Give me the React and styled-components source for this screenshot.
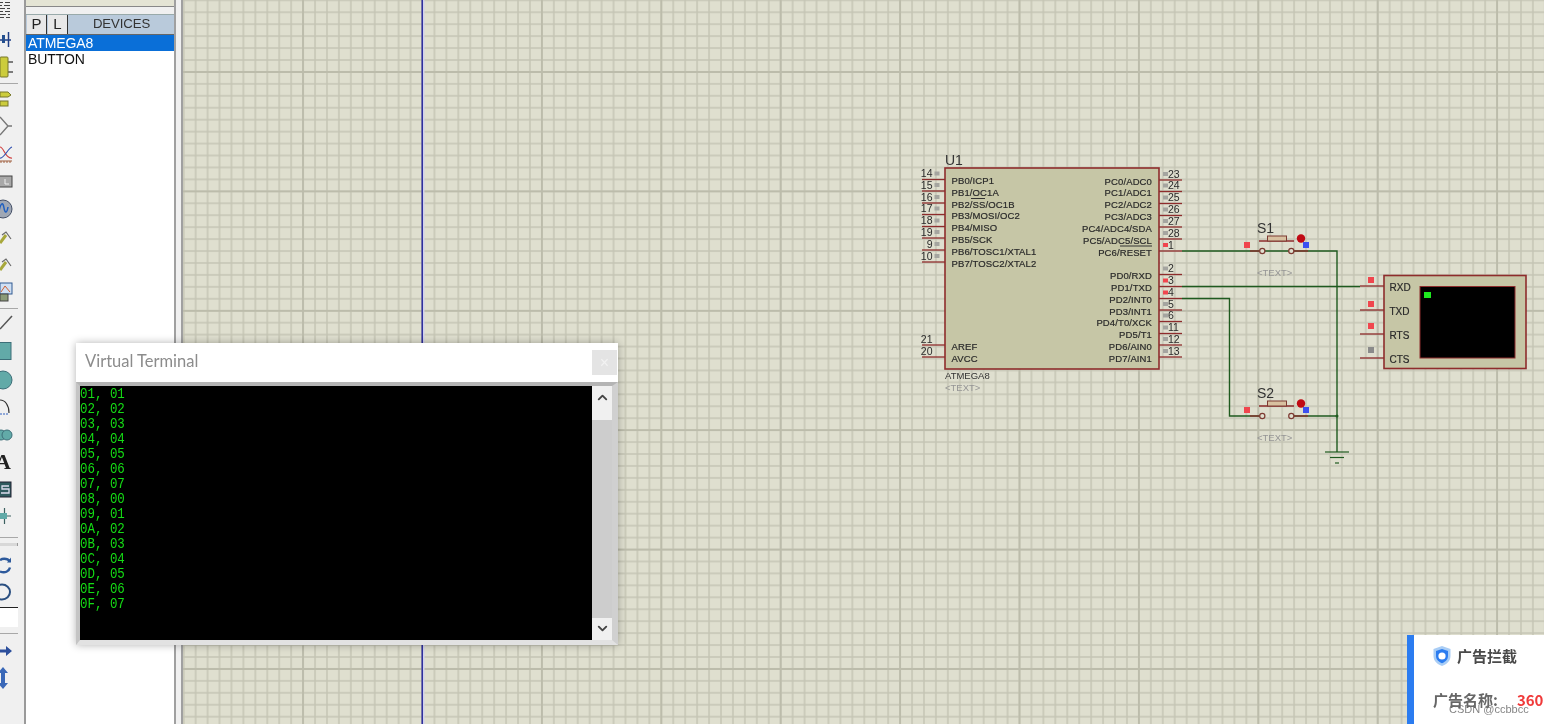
import styled, { createGlobalStyle } from "styled-components";
import { ChevronUp, ChevronDown } from "lucide-react";

const GlobalStyle = createGlobalStyle`
    html, body {
        margin: 0;
        padding: 0;
        overflow: hidden;
    }
`;

const terminalLines = [
    "01, 01", "02, 02", "03, 03", "04, 04", "05, 05",
    "06, 06", "07, 07", "08, 00", "09, 01", "0A, 02",
    "0B, 03", "0C, 04", "0D, 05", "0E, 06", "0F, 07"
];

const leftPins = [
    { num: "14", name: "PB0/ICP1", y: 179.5 },
    { num: "15", name: "PB1/OC1A", y: 191 },
    { num: "16", name: "PB2/SS/OC1B", y: 203 },
    { num: "17", name: "PB3/MOSI/OC2", y: 214.5 },
    { num: "18", name: "PB4/MISO", y: 226.5 },
    { num: "19", name: "PB5/SCK", y: 238 },
    { num: "9", name: "PB6/TOSC1/XTAL1", y: 250 },
    { num: "10", name: "PB7/TOSC2/XTAL2", y: 262 },
    { num: "21", name: "AREF", y: 345, plain: true },
    { num: "20", name: "AVCC", y: 357, plain: true }
];

const rightPins = [
    { num: "23", name: "PC0/ADC0", y: 180 },
    { num: "24", name: "PC1/ADC1", y: 191.5 },
    { num: "25", name: "PC2/ADC2", y: 203.5 },
    { num: "26", name: "PC3/ADC3", y: 215.5 },
    { num: "27", name: "PC4/ADC4/SDA", y: 227 },
    { num: "28", name: "PC5/ADC5/SCL", y: 239 },
    { num: "1", name: "PC6/RESET", y: 251, high: true },
    { num: "2", name: "PD0/RXD", y: 274.5 },
    { num: "3", name: "PD1/TXD", y: 286.5, high: true },
    { num: "4", name: "PD2/INT0", y: 298.5, high: true },
    { num: "5", name: "PD3/INT1", y: 310 },
    { num: "6", name: "PD4/T0/XCK", y: 321.5 },
    { num: "11", name: "PD5/T1", y: 333.5 },
    { num: "12", name: "PD6/AIN0", y: 345 },
    { num: "13", name: "PD7/AIN1", y: 357 }
];

const terminalPins = [
    { name: "RXD", y: 286, dot: "#f0464e", dotY: 280 },
    { name: "TXD", y: 310, dot: "#f0464e", dotY: 304 },
    { name: "RTS", y: 334, dot: "#f0464e", dotY: 326 },
    { name: "CTS", y: 358, dot: "#8a8a8a", dotY: 350 }
];

function ChipPinLeft({ pin }){
    return(
        <g>
            <PinLine x1="922" x2="945" y1={pin.y} y2={pin.y} />
            <PinNumber x="932.5" y={pin.y - 2.5} textAnchor="end">{pin.num}</PinNumber>
            {!pin.plain && <rect x="934.5" y={pin.y - 8} width="5" height="4" fill="#a5a5a0" />}
        </g>
    );
}

function ChipPinRight({ pin }){
    return(
        <g>
            <PinLine x1="1159" x2="1182" y1={pin.y} y2={pin.y} />
            <rect x="1163" y={pin.y - 8} width="5" height="4" fill={pin.high ? "#f0464e" : "#a5a5a0"} />
            <PinNumber x="1168" y={pin.y - 2.5}>{pin.num}</PinNumber>
        </g>
    );
}

function PushButton({ label, y }){
    return(
        <g>
            <PartLabel x="1257" y={y - 18}>{label}</PartLabel>
            <rect x="1244" y={y - 9} width="6" height="6" fill="#f0464e" />
            <PinLine x1="1250" x2="1259.5" y1={y} y2={y} />
            <PinLine x1="1294" x2="1308" y1={y} y2={y} />
            <circle cx="1262.3" cy={y} r="2.6" fill="#dfdfcf" stroke="#7d3a32" strokeWidth="1.2" />
            <circle cx="1291.3" cy={y} r="2.6" fill="#dfdfcf" stroke="#7d3a32" strokeWidth="1.2" />
            <PinLine x1="1259" x2="1294" y1={y - 10} y2={y - 10} />
            <rect x="1267.5" y={y - 15} width="19" height="5" fill="#d8c0a0" stroke="#7d3a32" />
            <circle cx="1301" cy={y - 12.5} r="4.2" fill="#c00a14" />
            <rect x="1303" y={y - 9} width="6" height="6" fill="#3c50f0" />
            <GhostText x="1257" y={y + 25}>&lt;TEXT&gt;</GhostText>
        </g>
    );
}

function GridPattern(){
    return(
        <defs>
            <pattern id="sheet" patternUnits="userSpaceOnUse" x="182.7" y="-0.7" width="119.4" height="119.4">
                <rect width="119.4" height="119.4" fill="#dfdfcf" />
                {[...Array(10).keys()].map(i => (
                    <g key={i} stroke="#c5c5b4" strokeWidth="1.5">
                        <line x1={i * 11.94 + 1} x2={i * 11.94 + 1} y1="0" y2="119.4" />
                        <line y1={i * 11.94 + 1} y2={i * 11.94 + 1} x1="0" x2="119.4" />
                    </g>
                ))}
            </pattern>
        </defs>
    );
}

function Schematic(){
    const majorX = [303, 422.5, 541.9, 661.3, 780.7, 900.1, 1019.5, 1138.9, 1258.3, 1377.7, 1497.1];
    const majorY = [72, 191.4, 310.8, 430.2, 549.6, 669];

    return(
        <Sheet viewBox="183 0 1361 724">
            <GridPattern />
            <rect x="183" y="0" width="1361" height="724" fill="url(#sheet)" />
            {majorX.map(x => <MajorLine key={x} x1={x} x2={x} y1="0" y2="724" />)}
            {majorY.map(y => <MajorLine key={y} x1="183" x2="1544" y1={y} y2={y} />)}
            <line x1="423.5" x2="423.5" y1="0" y2="724" stroke="#d2d2ea" strokeWidth="2" />
            <line x1="422.2" x2="422.2" y1="0" y2="724" stroke="#20209a" strokeWidth="1.4" />

            <Wire d="M1182 251 H1337 V452" />
            <Wire d="M1182 286.5 H1360" />
            <Wire d="M1182 298.5 H1229.5 V416 H1262" />
            <Wire d="M1291 416 H1337" />

            {leftPins.map(pin => <ChipPinLeft key={pin.num} pin={pin} />)}
            {rightPins.map(pin => <ChipPinRight key={pin.num} pin={pin} />)}
            <rect x="945" y="168" width="214" height="201" fill="#c6c6a6" stroke="#8e2c2c" strokeWidth="1.6" />
            {leftPins.map(pin => <PinName key={pin.num} x="951.5" y={pin.y + 4.5}>{pin.name}</PinName>)}
            {rightPins.map(pin => <PinName key={pin.num} x="1152" y={pin.y + 4.5} textAnchor="end">{pin.name}</PinName>)}
            <line x1="971" x2="985" y1="198.5" y2="198.5" stroke="#333" />
            <line x1="1120" x2="1152" y1="246" y2="246" stroke="#333" />

            <PartLabel x="945" y="165">U1</PartLabel>
            <ChipValue x="945" y="379">ATMEGA8</ChipValue>
            <GhostText x="945" y="391">&lt;TEXT&gt;</GhostText>

            <PushButton label="S1" y={251} />
            <PushButton label="S2" y={416} />

            <circle cx="1337" cy="416" r="1.5" fill="#1f5a1f" />
            <GroundLine x1="1325" x2="1349" y1="452" y2="452" />
            <GroundLine x1="1330" x2="1344" y1="457.5" y2="457.5" />
            <GroundLine x1="1335" x2="1339" y1="463" y2="463" />

            {terminalPins.map(pin => (
                <g key={pin.name}>
                    <PinLine x1="1360" x2="1384" y1={pin.y} y2={pin.y} />
                    <rect x="1368" y={pin.dotY - 3} width="6" height="6" fill={pin.dot} />
                </g>
            ))}
            <rect x="1384" y="275.5" width="142" height="93" fill="#c6c6a6" stroke="#8e2c2c" strokeWidth="1.6" />
            {terminalPins.map(pin => <TerminalPinName key={pin.name} x="1389.5" y={pin.y + 4.5}>{pin.name}</TerminalPinName>)}
            <rect x="1420" y="286.5" width="95" height="71.5" fill="#000" stroke="#8e2c2c" />
            <rect x="1424" y="292" width="7" height="6" fill="#1fe81f" />
        </Sheet>
    );
}

export default function App(){
    return(
        <>
            <GlobalStyle />
            <Page>
                <Toolbar>
                    <Tool $h={27}>
                        <Icon viewBox="0 0 24 24">
                            <path d="M0 .5h3M5 .5h5M0 3.5h2M4 3.5h6M0 6.5h5M7 6.5h3M0 9.5h3M5 9.5h5M0 12.5h6M8 12.5h2M0 15.5h4M6 15.5h4" stroke="#444" strokeWidth="1.2" />
                        </Icon>
                    </Tool>
                    <Tool $h={26}>
                        <Icon viewBox="0 0 24 24">
                            <path d="M0 12h11M8.5 4v15" stroke="#1f3f86" strokeWidth="1.5" fill="none" />
                            <rect x="2" y="7" width="3" height="8" fill="#24508f" />
                        </Icon>
                    </Tool>
                    <Tool $h={28}>
                        <Icon viewBox="0 0 24 24">
                            <path d="M8 7h5M8 17h5" stroke="#555" strokeWidth="1.3" />
                            <rect x="0" y="2" width="8" height="20" rx="1" fill="#cccc3c" stroke="#77772a" />
                        </Icon>
                    </Tool>
                    <ToolDivider $top={2} />
                    <Tool $h={27}>
                        <Icon viewBox="0 0 24 24">
                            <path d="M0 5h8l3 3-3 2H0z" fill="#cccc3c" stroke="#77772a" />
                            <rect x="0" y="14" width="8" height="5" fill="#cccc3c" stroke="#77772a" />
                        </Icon>
                    </Tool>
                    <Tool $h={28}>
                        <Icon viewBox="0 0 24 24">
                            <path d="M0 3l8 9-8 9M8 12h4" stroke="#777" strokeWidth="1.4" fill="none" />
                        </Icon>
                    </Tool>
                    <Tool $h={28}>
                        <Icon viewBox="0 0 24 24">
                            <path d="M0 5c4 0 5 12 12 11" stroke="#d04040" strokeWidth="1.2" fill="none" />
                            <path d="M0 16c4 1 8-10 12-11" stroke="#3050b0" strokeWidth="1.2" fill="none" />
                            <path d="M0 19h12M1 19v2M4 19v2M7 19v2M10 19v2" stroke="#a06040" strokeWidth="1" />
                        </Icon>
                    </Tool>
                    <Tool $h={27}>
                        <Icon viewBox="0 0 24 24">
                            <rect x="-1" y="6" width="13" height="11" fill="#a8a8a8" stroke="#444" />
                            <path d="M5 9v5h4" stroke="#eee" fill="none" />
                        </Icon>
                    </Tool>
                    <Tool $h={28}>
                        <Icon viewBox="0 0 24 24">
                            <circle cx="3" cy="12" r="9" fill="#9fa7b4" stroke="#444f66" />
                            <path d="M-1 14c2-9 4-9 5-3s3 5 4-1" stroke="#1f5fc0" strokeWidth="1.5" fill="none" />
                        </Icon>
                    </Tool>
                    <Tool $h={27}>
                        <Icon viewBox="0 0 24 24">
                            <path d="M2 10l4-3 5 7" stroke="#6a6a6a" strokeWidth="1.2" fill="none" />
                            <path d="M0 18l6-8" stroke="#a8a83c" strokeWidth="3" />
                        </Icon>
                    </Tool>
                    <Tool $h={28}>
                        <Icon viewBox="0 0 24 24">
                            <path d="M2 10l4-3 5 7" stroke="#6a6a6a" strokeWidth="1.2" fill="none" />
                            <path d="M0 18l6-8" stroke="#a8a83c" strokeWidth="3" />
                        </Icon>
                    </Tool>
                    <Tool $h={28}>
                        <Icon viewBox="0 0 24 24">
                            <rect x="0" y="3" width="12" height="11" fill="#cfe0f4" stroke="#315a92" />
                            <path d="M1 12l4-6 5 6" stroke="#d06030" fill="none" />
                            <rect x="0" y="14" width="8" height="7" fill="#8b9a78" stroke="#444" />
                        </Icon>
                    </Tool>
                    <ToolDivider $top={2} />
                    <Tool $h={26}>
                        <Icon viewBox="0 0 24 24">
                            <path d="M0 18L12 5" stroke="#555" strokeWidth="1.5" />
                        </Icon>
                    </Tool>
                    <Tool $h={30}>
                        <Icon viewBox="0 0 24 24">
                            <rect x="-1" y="3.5" width="12" height="17" fill="#62aaa8" stroke="#3c6e78" />
                        </Icon>
                    </Tool>
                    <Tool $h={28}>
                        <Icon viewBox="0 0 24 24">
                            <circle cx="3" cy="12" r="9" fill="#62aaa8" stroke="#3c6e78" />
                        </Icon>
                    </Tool>
                    <Tool $h={28}>
                        <Icon viewBox="0 0 24 24">
                            <path d="M0 4c5 0 9 5 9 13" stroke="#333" strokeWidth="1.2" fill="none" />
                            <path d="M0 18h9" stroke="#3060c0" strokeWidth="1.2" strokeDasharray="2 1" />
                        </Icon>
                    </Tool>
                    <Tool $h={26}>
                        <Icon viewBox="0 0 24 24">
                            <circle cx="1" cy="12" r="5" fill="#62aaa8" stroke="#3c6e78" />
                            <circle cx="7" cy="12" r="5" fill="#62aaa8" stroke="#3c6e78" />
                        </Icon>
                    </Tool>
                    <Tool $h={28}>
                        <ToolLetter>A</ToolLetter>
                    </Tool>
                    <Tool $h={27}>
                        <Icon viewBox="0 0 24 24">
                            <rect x="-1" y="4" width="12" height="15" fill="#2f5a5e" stroke="#223" />
                            <path d="M9 8H2v3h7v4H1" stroke="#dde" strokeWidth="1.3" fill="none" />
                        </Icon>
                    </Tool>
                    <Tool $h={26}>
                        <Icon viewBox="0 0 24 24">
                            <path d="M0 12h11M4.5 4v16" stroke="#3c6060" strokeWidth="1.2" />
                            <rect x="0" y="9" width="7" height="6" fill="#62aaa8" />
                        </Icon>
                    </Tool>
                    <ToolDivider $top={8} />
                    <SliderBar />
                    <Tool $h={35}>
                        <Icon viewBox="0 0 24 24">
                            <path d="M10 9.5c-3-4-9-3-10-1M0 19.5c5 2 9 0 10-4" stroke="#2d5a9c" strokeWidth="2.4" fill="none" />
                            <path d="M7 10.5h4v-5z" fill="#2d5a9c" />
                        </Icon>
                    </Tool>
                    <Tool $h={22}>
                        <Icon viewBox="0 0 24 24">
                            <ellipse cx="2" cy="12" rx="8" ry="7.5" stroke="#2a4f80" strokeWidth="2" fill="none" />
                        </Icon>
                    </Tool>
                    <BlackRule />
                    <WhiteSlot />
                    <ToolDivider $top={6} />
                    <Tool $h={32}>
                        <Icon viewBox="0 0 24 24">
                            <path d="M0 10.5h6V7l6 5-6 5v-3.5H0z" fill="#2c4f9c" />
                        </Icon>
                    </Tool>
                    <Tool $h={22}>
                        <Icon viewBox="0 0 24 24">
                            <path d="M3 1l5 6H5v10h3l-5 6-5-6h3V7h-3z" fill="#3a68b8" />
                        </Icon>
                    </Tool>
                </Toolbar>

                <DevicePanel>
                    <OverviewBox />
                    <DeviceHeader>
                        <ModeButton>P</ModeButton>
                        <ModeButton>L</ModeButton>
                        <DeviceTitle>DEVICES</DeviceTitle>
                    </DeviceHeader>
                    <DeviceList>
                        <DeviceRow $selected>ATMEGA8</DeviceRow>
                        <DeviceRow>BUTTON</DeviceRow>
                    </DeviceList>
                </DevicePanel>

                <Canvas>
                    <Schematic />
                </Canvas>

                <TerminalWindow>
                    <TitleBar>
                        <WindowTitle>Virtual Terminal</WindowTitle>
                        <CloseButton>×</CloseButton>
                    </TitleBar>
                    <TerminalBody>
                        <Screen>
                            {terminalLines.map(line => <ScreenLine key={line}>{line}</ScreenLine>)}
                        </Screen>
                        <Scrollbar>
                            <ChevronUp size={15} strokeWidth={3} color="#444" />
                            <ScrollThumb />
                            <ChevronDown size={15} strokeWidth={3} color="#444" />
                        </Scrollbar>
                    </TerminalBody>
                </TerminalWindow>

                <AdToast>
                    <AdTitle>
                        <svg width="20" height="22" viewBox="0 0 20 22">
                            <path d="M10 1l8.5 3v7c0 5-4 8.5-8.5 10C5.5 19.5 1.5 16 1.5 11V4z" fill="#a9cdf5" />
                            <path d="M10 4l6 2v5c0 3.5-2.8 6-6 7.3C6.8 17 4 14.5 4 11V6z" fill="#2b7cf0" />
                            <circle cx="10" cy="11" r="3.6" fill="#fff" />
                        </svg>
                        <span>广告拦截</span>
                    </AdTitle>
                    <AdLine>
                        <span>广告名称:</span>
                        <AdValue>360</AdValue>
                    </AdLine>
                    <Watermark>CSDN @ccbbcc</Watermark>
                </AdToast>
            </Page>
        </>
    );
}

const Page = styled.div`
    position: relative;
    width: 1544px;
    height: 724px;
    display: flex;
    overflow: hidden;
    background: #f0f0f0;
    font-family: 'Liberation Sans', sans-serif;
    filter: blur(0.3px);
`;

// Left toolbar

const Toolbar = styled.div`
    width: 24px;
    flex-shrink: 0;
    display: flex;
    flex-direction: column;
    background: #f0f0f0;
    border-right: 2px solid #9a9a9a;
    box-sizing: content-box;
    overflow: hidden;
`;

const Tool = styled.div`
    height: ${p => p.$h}px;
    flex-shrink: 0;
    display: flex;
    align-items: center;
`;

const Icon = styled.svg`
    width: 24px;
    height: 24px;
    flex-shrink: 0;
    overflow: hidden;
`;

const ToolLetter = styled.span`
    font-family: 'Liberation Serif', serif;
    font-weight: 700;
    font-size: 22px;
    line-height: 22px;
    color: #222;
    margin-left: -5px;
`;

const ToolDivider = styled.div`
    height: 1px;
    flex-shrink: 0;
    width: 18px;
    margin-top: ${p => p.$top || 1}px;
    margin-bottom: 1px;
    background: #a8a8a8;
`;

const SliderBar = styled.div`
    height: 3px;
    flex-shrink: 0;
    width: 18px;
    margin-top: 4px;
    background: #d8d8d8;
    border-right: 1px solid #999;
    box-sizing: border-box;
`;

const BlackRule = styled.div`
    height: 1px;
    flex-shrink: 0;
    width: 18px;
    margin-top: 4px;
    background: #222;
`;

const WhiteSlot = styled.div`
    height: 19px;
    flex-shrink: 0;
    width: 18px;
    background: #fff;
`;

// Device panel

const DevicePanel = styled.div`
    width: 150px;
    flex-shrink: 0;
    display: flex;
    flex-direction: column;
    box-sizing: border-box;
    background: #fff;
    border-right: 2px solid #a0a0a0;
    margin-right: 5px;
`;

const OverviewBox = styled.div`
    height: 6px;
    margin-bottom: 7px;
    background: #e4e4d4;
    border-bottom: 1px solid #888;
    box-shadow: 0 7px 0 #f0f0f0;
`;

const DeviceHeader = styled.div`
    height: 21px;
    display: flex;
    align-items: stretch;
    gap: 1px;
    padding-left: 1px;
    background: #b9cadb;
    border-top: 1px solid #9aa;
    border-bottom: 1px solid #666;
    box-sizing: border-box;
`;

const ModeButton = styled.div`
    width: 20px;
    display: flex;
    align-items: center;
    justify-content: center;
    padding-bottom: 2px;
    font-family: 'Liberation Sans', sans-serif;
    font-size: 15px;
    color: #222;
    background: #e8e8e8;
    border-right: 1px solid #333;
    box-sizing: border-box;
`;

const DeviceTitle = styled.div`
    flex: 1;
    text-align: center;
    font-size: 13.2px;
    line-height: 17px;
    letter-spacing: -0.1px;
    color: #333;
`;

const DeviceList = styled.div`
    flex: 1;
    background: #fff;
`;

const DeviceRow = styled.div`
    height: 16px;
    line-height: 17px;
    padding-left: 2px;
    font-size: 14px;
    letter-spacing: -0.1px;
    color: ${p => p.$selected ? "#fff" : "#111"};
    background: ${p => p.$selected ? "#0a6fd8" : "transparent"};
`;

// Schematic sheet

const Canvas = styled.div`
    flex: 1;
    min-width: 0;
    position: relative;
    border-left: 2px solid #a0a0a0;
`;

const Sheet = styled.svg`
    display: block;
    width: 100%;
    height: 724px;
`;

const MajorLine = styled.line`
    stroke: #bcbcab;
    stroke-width: 1.8;
`;

const PinLine = styled.line`
    stroke: #8e2c2c;
    stroke-width: 1.3;
`;

const Wire = styled.path`
    fill: none;
    stroke: #1f5a1f;
    stroke-width: 1.4;
`;

const GroundLine = styled.line`
    stroke: #1f5a1f;
    stroke-width: 1.2;
`;

const PinName = styled.text`
    font-family: 'Liberation Sans', sans-serif;
    font-size: 9.5px;
    letter-spacing: 0.12px;
    fill: #2a2a2a;
    stroke: #2a2a2a;
    stroke-width: 0.2px;
`;

const PinNumber = styled.text`
    font-family: 'Liberation Sans', sans-serif;
    font-size: 10.5px;
    fill: #2a2a2a;
`;

const PartLabel = styled.text`
    font-family: 'Liberation Sans', sans-serif;
    font-size: 14px;
    fill: #333;
`;

const ChipValue = styled.text`
    font-family: 'Liberation Sans', sans-serif;
    font-size: 9.5px;
    fill: #333;
`;

const GhostText = styled.text`
    font-family: 'Liberation Sans', sans-serif;
    font-size: 9.5px;
    fill: #959595;
`;

const TerminalPinName = styled.text`
    font-family: 'Liberation Sans', sans-serif;
    font-size: 10px;
    fill: #2a2a2a;
    stroke: #2a2a2a;
    stroke-width: 0.2px;
`;

// Floating terminal window

const TerminalWindow = styled.div`
    position: absolute;
    left: 76px;
    top: 343px;
    width: 542px;
    height: 302px;
    display: flex;
    flex-direction: column;
    background: #fff;
    box-shadow: 0 0 8px rgba(0, 0, 0, 0.3);
`;

const TitleBar = styled.div`
    height: 39px;
    flex-shrink: 0;
    display: flex;
    align-items: center;
    justify-content: space-between;
    padding: 0 1px 0 9px;
    box-sizing: border-box;
`;

const WindowTitle = styled.span`
    font-family: Lato, sans-serif;
    font-size: 16.5px;
    line-height: 16px;
    margin-top: -3px;
    color: #8c8c8c;
`;

const CloseButton = styled.div`
    width: 25px;
    height: 25px;
    display: flex;
    align-items: center;
    justify-content: center;
    font-size: 16px;
    color: #f2f2f2;
    background: #e4e4e4;
`;

const TerminalBody = styled.div`
    flex: 1;
    min-height: 0;
    display: flex;
    background: #fff;
    border-top: 4px solid #b4b4b4;
    border-left: 4px solid #c4c4c4;
    border-right: 6px solid #d0d0d0;
    border-bottom: 5px solid #e2e2e2;
`;

const Screen = styled.div`
    flex: 1;
    min-width: 0;
    background: #000;
    padding-top: 1px;
    overflow: hidden;
`;

const ScreenLine = styled.div`
    height: 15px;
    line-height: 15px;
    font-family: 'Liberation Mono', monospace;
    font-size: 15px;
    color: #14dc14;
    transform: scaleX(0.83);
    transform-origin: left center;
    white-space: pre;
`;

const Scrollbar = styled.div`
    width: 20px;
    flex-shrink: 0;
    display: flex;
    flex-direction: column;
    align-items: center;
    justify-content: space-between;
    padding: 4px 0;
    box-sizing: border-box;
    background: #f0f0f0;
`;

const ScrollThumb = styled.div`
    flex: 1;
    width: 100%;
    margin: 15px 0 3px;
    background: #cdcdcd;
`;

// Ad popup in the corner

const AdToast = styled.div`
    position: absolute;
    left: 1407px;
    top: 635px;
    width: 150px;
    height: 89px;
    box-sizing: border-box;
    padding: 10px 0 0 19px;
    background: #fff;
    border-left: 7px solid #2b7cf0;
    overflow: hidden;
`;

const AdTitle = styled.div`
    display: flex;
    align-items: center;
    gap: 5px;
    margin-left: -1px;
    font-family: 'Noto Sans CJK SC', sans-serif;
    font-weight: 700;
    font-size: 15px;
    line-height: 22px;
    color: #4a4a4a;
`;

const AdLine = styled.div`
    display: flex;
    gap: 19px;
    margin-top: 23px;
    font-family: 'Noto Sans CJK SC', sans-serif;
    font-weight: 700;
    font-size: 15px;
    line-height: 20px;
    color: #666;
    white-space: nowrap;
`;

const AdValue = styled.span`
    color: #f03a3a;
`;

const Watermark = styled.div`
    position: absolute;
    left: 35px;
    top: 68px;
    font-size: 11px;
    color: rgba(110, 110, 110, 0.85);
    white-space: nowrap;
`;
